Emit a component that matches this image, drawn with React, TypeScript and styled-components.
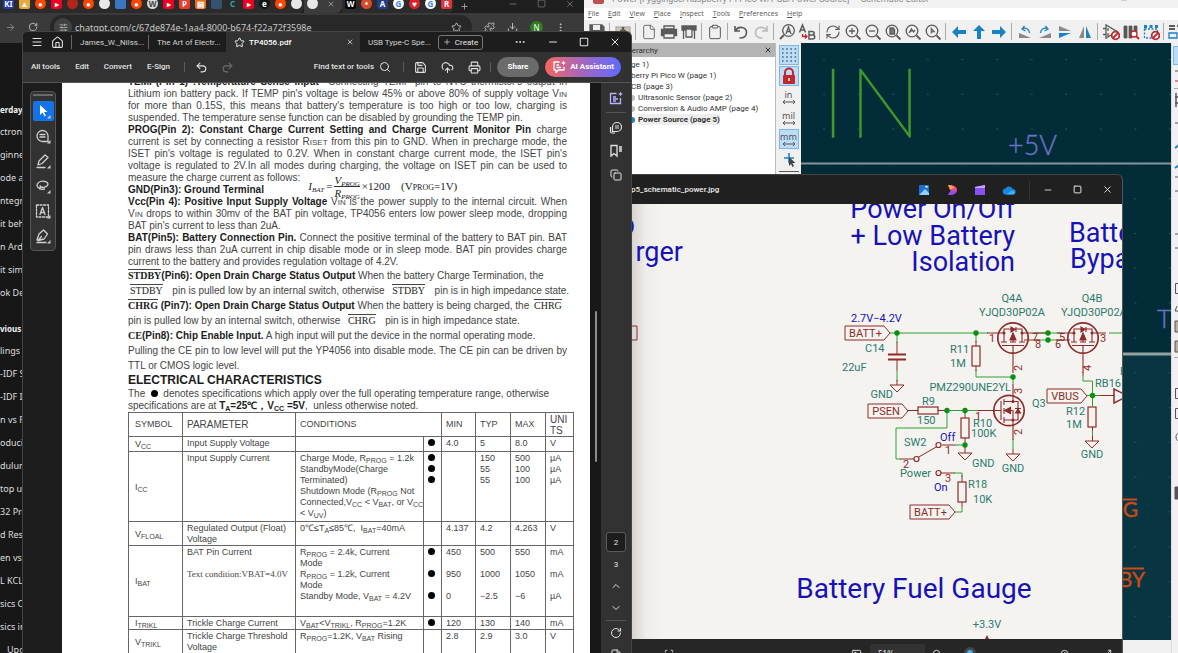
import React from 'react';
import styled, { createGlobalStyle, css } from 'styled-components';
import {
  Menu, House, Star, X, Plus, Ellipsis, Minus, Square, Search, Save, CloudUpload, Printer, Undo2, Redo2,
  MessageSquareText, Bookmark, Copy, ChevronUp, ChevronDown, RotateCw, RefreshCw, ZoomIn, ZoomOut, File as FileIcon,
  Clipboard, ArrowRight, Puzzle, Download, EllipsisVertical, SlidersHorizontal,
  Scan, Maximize2, Image as ImageIcon,
} from 'lucide-react';

const Global = createGlobalStyle`
  * { box-sizing: border-box; }
  body { margin: 0; background: #1b1b1b; }
  button { border: 0; padding: 0; margin: 0; background: none; color: inherit; font: inherit; display: flex; align-items: center; justify-content: center; white-space: nowrap; }
  svg { display: block; flex: none; }
`;

const ui = `"Noto Sans", "Open Sans", sans-serif`;
const narrowUi = `Roboto, "Noto Sans", sans-serif`;

const Desktop = styled.main`
  position: relative;
  min-height: 100vh;
  overflow: hidden;
  font-family: ${ui};
`;

/* ---------- web browser ---------- */
const Browser = styled.section`
  position: absolute;
  inset: 0 auto 0 0;
  width: 584px;
  display: flex;
  flex-direction: column;
  background: #171717;
  color: #d8d8d8;
`;
const TabStrip = styled.div`
  display: flex;
  align-items: center;
  height: 13px;
  background: #1f1f1f;
  color: #bdbdbd;
`;
const TabGroup = styled.div<{ $active?: boolean }>`
  display: flex;
  align-items: center;
  height: 13px;
  padding-bottom: 6px;
  border-radius: 0 0 6px 0;
  background: ${p => (p.$active ? '#3c3c3c' : '#2b2b2b')};
`;
const Favicon = styled.span<{ $bg: string; $fg?: string; $round?: boolean }>`
  flex: none;
  width: 11px;
  height: 11px;
  margin: 0 2px 0 3px;
  overflow: hidden;
  border-radius: ${p => (p.$round ? '6px' : '2px')};
  background: ${p => p.$bg};
  color: ${p => p.$fg || '#fff'};
  font-size: 8px;
  line-height: 11px;
  font-weight: 700;
  text-align: center;
`;
const StripEnd = styled.div`
  display: flex;
  flex: 1;
  justify-content: flex-end;
  gap: 19px;
  padding: 0 9px 6px 0;
  color: #777;
`;
const AddressRow = styled.div`
  display: flex;
  flex: none;
  align-items: center;
  height: 30px;
  padding: 0 8px 2px 5px;
  gap: 12px;
  background: #3a3a3a;
  color: #c8c8c8;
`;
const Address = styled.div`
  display: flex;
  align-items: center;
  width: 422px;
  height: 24px;
  padding: 0 10px 0 4px;
  gap: 3px;
  border-radius: 12px;
  background: #282828;
  font-size: 9px;
  span { flex: 1; }
`;
const SiteBadge = styled.div`
  display: grid;
  place-items: center;
  width: 18px;
  height: 18px;
  border-radius: 9px;
  background: #424242;
`;
const Avatar = styled.div`
  width: 13px;
  height: 13px;
  border-radius: 7px;
  background: #2f7d1f;
  color: #fff;
  font-size: 8px;
  line-height: 13px;
  text-align: center;
`;
const History = styled.nav`
  display: flex;
  flex-direction: column;
  width: 22px;
  padding-top: 55px;
  overflow: hidden;
  font-size: 9px;
`;
const HistoryItem = styled.a<{ $head?: boolean }>`
  flex: none;
  height: 23px;
  line-height: 23px;
  color: #dedede;
  text-decoration: none;
  white-space: nowrap;
  ${p => p.$head && css`height: 22px; font-size: 8px; font-weight: 700; color: #f2f2f2;`}
`;
const HistoryGap = styled.div`
  flex: none;
  height: 13px;
`;

/* ---------- schematic editor ---------- */
const Editor = styled.section`
  position: absolute;
  inset: 0 0 0 584px;
  display: flex;
  flex-direction: column;
  background: #f0f0f0;
  color: #555;
  overflow: hidden;
`;
const EditorTitle = styled.div`
  flex: none;
  display: flex;
  align-items: flex-end;
  height: 8px;
  padding: 0 50px 4px 6px;
  gap: 6px;
  overflow: hidden;
  background: #f2f2f2;
  color: #8a8a8a;
  h1 { flex: 1; margin: 0; font-family: ${narrowUi}; font-size: 9px; line-height: 9px; font-weight: 400; white-space: nowrap; }
`;
const MenuBar = styled.div`
  flex: none;
  display: flex;
  align-items: center;
  height: 12px;
  padding-left: 4px;
  gap: 9px;
  background: #fff;
  color: #555;
  font-family: "Open Sans", sans-serif;
  font-size: 7px;
  line-height: 10px;
  u { text-underline-offset: 1px; }
`;
const ToolRow = styled.div`
  flex: none;
  display: flex;
  align-items: center;
  height: 23px;
  padding-left: 3px;
  color: #5a5a5a;
`;
const Tool = styled.button<{ $dim?: boolean }>`
  flex: none;
  width: 20px;
  height: 20px;
  opacity: ${p => (p.$dim ? 0.35 : 1)};
`;
const Rule = styled.span`
  flex: none;
  width: 1px;
  height: 17px;
  margin: 0 3px 0 2px;
  background: #a9a9a9;
`;
const EditorBody = styled.div`
  display: flex;
  flex: 1;
  min-height: 0;
`;
const Hierarchy = styled.aside`
  width: 192px;
  flex: none;
  background: #fff;
  border-right: 1px solid #bbb;
  color: #333;
  font-family: ${narrowUi};
`;
const HierarchyHead = styled.div`
  display: flex;
  align-items: center;
  justify-content: space-between;
  height: 14px;
  padding: 0 3px 0 40px;
  background: #b4b4b4;
  font-size: 8px;
`;
const SheetList = styled.ul`
  margin: 0;
  padding: 2px 0 0;
  list-style: none;
  font-size: 8px;
  line-height: 11px;
`;
const Sheet = styled.li<{ $child?: boolean; $current?: boolean }>`
  display: flex;
  align-items: center;
  padding-left: ${p => (p.$child ? 45 : 47)}px;
  white-space: nowrap;
  ${p => p.$current && css`
    font-weight: 700;
    span { background: #eee; }
  `}
`;
const SheetDot = styled.i<{ $on?: boolean }>`
  width: 6px;
  height: 6px;
  margin-right: 3px;
  border-radius: 3px;
  background: ${p => (p.$on ? '#1a81c4' : '#bbb')};
`;
const Palette = styled.div`
  display: flex;
  flex: none;
  flex-direction: column;
  align-items: center;
  width: 25px;
  padding-top: 2px;
  gap: 1px;
`;
const PaletteTool = styled.button<{ $on?: boolean }>`
  width: 20px;
  height: 20px;
  flex-direction: column;
  border: 1px solid ${p => (p.$on ? '#7fb5e6' : 'transparent')};
  background: ${p => (p.$on ? '#bcdcf7' : 'transparent')};
  font-size: 9px;
  line-height: 9px;
`;
const Canvas = styled.div`
  flex: 1;
  min-width: 0;
  margin-bottom: 13px;
  overflow: hidden;
  background: #022c37;
`;
const EdgeTools = styled.div`
  flex: none;
  width: 7px;
  overflow: hidden;
  border-left: 1px solid #ddd;
`;

/* ---------- photo viewer ---------- */
const Viewer = styled.section`
  position: absolute;
  inset: 174px 55px 0 600px;
  display: flex;
  flex-direction: column;
  border-top: 1px solid #444;
  border-right: 1px solid #555;
  border-radius: 0 6px 0 0;
  overflow: hidden;
  background: #202020;
  color: #eee;
`;
const ViewerBar = styled.header`
  flex: none;
  display: flex;
  align-items: center;
  height: 29px;
  padding: 0 9px 0 31px;
  gap: 13px;
  font-family: ${narrowUi};
  h2 { flex: 1; margin: 0; font-size: 8px; font-weight: 500; }
`;
const ViewerApps = styled.div`
  display: flex;
  align-items: center;
  gap: 16px;
`;
const ViewerSep = styled.span`
  width: 1px;
  height: 18px;
  background: #333;
`;
const WinButtons = styled.div`
  display: flex;
  align-items: center;
  gap: 20px;
`;
const Photo = styled.div`
  flex: 1;
  min-height: 0;
  overflow: hidden;
  background: linear-gradient(90deg, #d4d1ce 31px, #efedea 46px, #f5f3ef 64px);
`;
const ViewerFoot = styled.footer`
  flex: none;
  display: flex;
  align-items: flex-start;
  height: 14px;
  padding: 10px 10px 0 64px;
  overflow: hidden;
  background: #262626;
  font-size: 8px;
`;
const FootSpace = styled.span<{ $max?: number }>`
  flex: 1;
  max-width: ${p => (p.$max ? `${p.$max}px` : 'none')};
`;
const ZoomBox = styled.button`
  width: 55px;
  height: 20px;
  margin: -5px 7px 0 8px;
  padding-left: 8px;
  justify-content: flex-start;
  border-radius: 3px;
  background: #323232;
  line-height: 8px;
`;
const Slider = styled.input`
  appearance: none;
  width: 88px;
  height: 12px;
  margin: -2px 14px 0 16px;
  background: transparent;
  &::-webkit-slider-thumb { appearance: none; width: 12px; height: 12px; border-radius: 6px; border: 3px solid #454545; background: #45b2f0; }
`;

/* ---------- PDF reader ---------- */
const Reader = styled.section`
  position: absolute;
  inset: 31px auto 0 22px;
  width: 610px;
  display: flex;
  flex-direction: column;
  border: 1px solid #444;
  border-bottom: 0;
  border-radius: 5px 6px 0 0;
  overflow: hidden;
  background: #1d1d1d;
  color: #e2e2e2;
  font-family: ${narrowUi};
`;
const ReaderTabs = styled.header`
  flex: none;
  display: flex;
  align-items: center;
  height: 20px;
  padding-left: 8px;
  font-size: 8px;
`;
const IconButton = styled.button<{ $w?: number }>`
  flex: none;
  width: ${p => p.$w || 24}px;
  height: 20px;
`;
const DocTab = styled.button<{ $w: number; $active?: boolean; $plain?: boolean }>`
  flex: none;
  width: ${p => p.$w}px;
  height: ${p => (p.$active ? 20 : 14)}px;
  padding: 0 6px 0 8px;
  gap: 4px;
  justify-content: flex-start;
  border-left: ${p => (p.$active || p.$plain ? 0 : 1)}px solid #666;
  background: ${p => (p.$active ? '#323232' : 'transparent')};
  color: ${p => (p.$active ? '#fff' : '#d4d4d4')};
  font-weight: ${p => (p.$active ? 500 : 400)};
  span { flex: 1; text-align: left; }
`;
const CreateButton = styled.button`
  flex: none;
  width: 45px;
  height: 15px;
  gap: 4px;
  border: 1px solid #777;
  border-radius: 3px;
`;
const ReaderTools = styled.div`
  flex: none;
  display: flex;
  align-items: center;
  height: 31px;
  padding: 0 10px 0 8px;
  border-bottom: 1px solid #555;
  background: #323232;
  font-size: 8px;
  line-height: 12px;
`;
const ToolWords = styled.div`
  display: flex;
  gap: 15px;
  margin-right: 14px;
  font-weight: 500;
`;
const ToolSep = styled.span`
  width: 1px;
  height: 10px;
  background: #5a5a5a;
`;
const Find = styled.button`
  gap: 5px;
  margin-left: auto;
  margin-right: 12px;
  font-weight: 500;
`;
const Pill = styled.button<{ $ai?: boolean }>`
  width: ${p => (p.$ai ? 76 : 42)}px;
  height: 20px;
  gap: 4px;
  margin-left: 6px;
  border-radius: 10px;
  background: ${p => (p.$ai ? 'linear-gradient(90deg, #f8655f, #9a67c9 55%, #5e6bff)' : '#6b6b6b')};
  color: #fff;
  font-weight: 700;
`;
const ReaderBody = styled.div`
  display: flex;
  flex: 1;
  min-height: 0;
`;
const SideTools = styled.div`
  flex: none;
  width: 39px;
  padding: 8px 6px 0 7px;
`;
const SideBox = styled.div`
  display: flex;
  flex-direction: column;
  align-items: center;
  height: 160px;
  gap: 5px;
  border: 1px solid #555;
  border-radius: 4px;
  background: #323232;
`;
const Grip = styled.span`
  width: 20px;
  height: 2px;
  margin: 2px 0 0;
  background: #6a6a6a;
`;
const SideTool = styled.button<{ $on?: boolean }>`
  width: 21px;
  height: 20px;
  border-radius: 2px;
  background: ${p => (p.$on ? '#1473e6' : 'transparent')};
`;
const Page = styled.article`
  flex: 1;
  min-width: 0;
  padding-left: 66px;
  padding-right: 16px;
  overflow: hidden;
  background: #fff;
  color: #444;
  font-family: "Liberation Sans", Arial, sans-serif;
  font-size: 10px;
  b { color: #1c1c1c; }
`;
const Copybox = styled.div<{ $loose?: boolean; $first?: boolean }>`
  width: 439px;
  margin-top: ${p => (p.$first ? -7 : 0)}px;
  line-height: ${p => (p.$loose ? 15 : 12)}px;
`;
const Line = styled.div<{ $fill?: boolean }>`
  white-space: nowrap;
  height: 1lh;
  text-align-last: ${p => (p.$fill ? 'justify' : 'left')};
`;
const Small = styled.span`
  font-size: 8px;
  line-height: 1px;
`;
const Sub = styled.sub`
  font-size: 7px;
  line-height: 1px;
  vertical-align: -2px;
`;
const Bar = styled.span<{ $bold?: boolean }>`
  display: inline-block;
  height: 12px;
  margin: ${p => (p.$bold ? '0' : '0 4px 0 2px')};
  border-top: 1px solid #444;
  color: #222;
  font-family: "Liberation Serif", serif;
  font-size: 10px;
  line-height: 12px;
  font-weight: ${p => (p.$bold ? 700 : 400)};
`;
const Serif = styled.span`
  font-family: "Liberation Serif", serif;
`;
const FormulaLine = styled(Line)`
  display: flex;
  align-items: center;
`;
const Formula = styled.span`
  display: flex;
  align-items: center;
  margin-left: 8px;
  gap: 2px;
  height: 12px;
  padding-top: 16px;
  color: #222;
  font-family: "Liberation Serif", serif;
  font-size: 11px;
`;
const Fraction = styled.span`
  display: flex;
  flex-direction: column;
  align-items: center;
  line-height: 12px;
  font-style: italic;
  span + span { border-top: 1px solid #333; }
`;
const Condition = styled.span`
  margin-left: 9px;
`;
const Title = styled.h2`
  margin: 0;
  font-size: 12px;
  line-height: 15px;
  color: #1c1c1c;
`;
const Dot = styled.i`
  display: inline-block;
  width: 7px;
  height: 7px;
  border-radius: 4px;
  background: #000;
`;
const Spec = styled.table`
  width: 446px;
  table-layout: fixed;
  border-collapse: collapse;
  font-size: 9px;
  line-height: 11px;
  th, td { border: 1px solid #666; padding: 1px 0 0 4px; font-weight: 400; text-align: left; vertical-align: top; white-space: nowrap; }
  th { vertical-align: middle; padding-top: 0; }
  td:first-child, th:first-child { vertical-align: middle; padding-left: 6px; }
`;
const Row = styled.tr<{ $h: number }>`
  height: ${p => p.$h}px;
`;
const Head = styled.th<{ $big?: boolean; $open?: boolean }>`
  font-size: ${p => (p.$big ? 10 : 9)}px;
  ${p => p.$open && css`&& { border-left-color: transparent; }`}
`;
const Cell = styled.td`
  div { height: 11px; }
`;
const Track = styled.div`
  flex: none;
  width: 11px;
  padding: 228px 0 0 5px;
  background: #181818;
`;
const Thumb = styled.div`
  width: 2px;
  height: 151px;
  border-radius: 1px;
  background: #8c8c8c;
`;
const Rail = styled.aside`
  flex: none;
  display: flex;
  flex-direction: column;
  align-items: center;
  width: 30px;
  padding-top: 5px;
  gap: 4px;
  background: #323232;
  font-size: 8px;
`;
const RailSep = styled.span`
  flex: none;
  width: 20px;
  height: 1px;
  background: #555;
`;
const PageNo = styled.button<{ $on?: boolean }>`
  flex: none;
  width: 20px;
  height: 20px;
  border: 1px solid ${p => (p.$on ? '#5a5a5a' : 'transparent')};
  border-radius: 3px;
  background: ${p => (p.$on ? '#1d1d1d' : 'transparent')};
`;
const RailEnd = styled.div`
  display: flex;
  flex: none;
  flex-direction: column;
  align-items: center;
  height: 121px;
  margin-top: auto;
  gap: 2px;
  overflow: hidden;
`;

/* ---------- data ---------- */
const favA: [string, string, boolean?, string?][] = [
  ['#2439a8', 'KI'], ['#e5a93c', '▲'], ['#ff4500', '●', true], ['#f00020', '▸'], ['#b3261e', '', true], ['#ff4500', '●', true],
  ['#e8e8e8', '', true], ['#3a76c4', ''], ['#ff4500', '●', true], ['#d8d8d8', 'W', true, '#444'], ['#f00020', '▸'], ['#f03a28', 'P'],
  ['#e96a1d', '▤'], ['#34536e', ''], ['#2b2b2b', 'C', true, '#28a5b5'], ['#f00020', '▸'], ['#151515', 'e', true], ['#ff4500', '●', true],
  ['#e8e8e8', '', true],
];
const favB: [string, string, boolean?, string?][] = [
  ['#050505', 'W'], ['#d84a2c', '•', true], ['#213f82', 'A'], ['#fff', 'G', true, '#3f7be8'], ['#d8232a', '♥', true],
  ['#fff', 'G', true, '#3f7be8'], ['#e0323c', 'R'],
];
const dayOne = ['ctronic', 'ginner', 'ode an', 'ntegra', 'it beh', 'n Ardu', 'it sim', 'ok Dec'];
const weekOne = ['lings o', '-IDF S', '-IDF I', 'n vs Fe', 'oducin', 'dulum', 'top us', '32 Pro', 'd Resi', 'en vs S', 'L KCL C', 'sics C', 'sics in'];

/* ---------- schematic glyphs ---------- */
const RED = '#8f2b2b';
const GREEN = '#2fa12f';
const TEAL = '#2b7b70';
const BLUE = '#1512b8';

const Wire = ({ d, c = GREEN }: { d: string; c?: string }) => <path d={d} fill="none" stroke={c} strokeWidth="1" />;
const Joint = ({ x, y }: { x: number; y: number }) => <circle cx={x} cy={y} r="2.7" fill="#0a8f12" />;
const Label = styled.text<{ $c?: string; $s?: number }>`
  font-family: Roboto, sans-serif;
  font-size: ${p => p.$s || 11}px;
  fill: ${p => p.$c || TEAL};
`;
const Flag = ({ x, y, w, name }: { x: number; y: number; w: number; name: string }) => (
  <g>
    <path d={`M${x} ${y - 7}h${w - 6}l6 7l-6 7h-${w - 6}z`} fill="none" stroke={RED} />
    <Label $c={RED} x={x + (w - 6) / 2 + 1} y={y + 4} textAnchor="middle">{name}</Label>
  </g>
);
const Ground = ({ x, y }: { x: number; y: number }) => <path d={`M${x - 7} ${y}h14l-7 7z`} fill="none" stroke={RED} />;
const Resistor = ({ x, y }: { x: number; y: number }) => <rect x={x - 4} y={y} width="8" height="20" fill="none" stroke={RED} strokeWidth="1.2" />;
const Pfet = ({ x }: { x: number }) => (
  <g stroke={RED} fill="none" strokeWidth="1.1">
    <circle cx={x} cy="338" r="15.2" strokeWidth="1.7" />
    <path d={`M${x - 26} 333h17v9M${x + 9} 342v-9h14M${x - 9} 333v-4h18v4M${x} 336v6M${x - 12} 342h6M${x - 3} 342h6M${x + 6} 342h6M${x - 11} 345.500h22M${x} 345v28`} />
    <path d={`M${x - 2} 327v5l4-2.500zM${x + 3} 327v5`} fill={RED} />
    <path d={`M${x - 3} 340h6l-3-7z`} fill={RED} />
    <circle cx={x - 9} cy="333" r="1" fill={RED} />
    <circle cx={x + 9} cy="333" r="1" fill={RED} />
  </g>
);

const Schematic = () => (
  <svg width="523" height="435" viewBox="600 204 523 435" role="img" aria-label="Battery power schematic">
    <g>
      <Label $c={BLUE} $s={27} x="635" y="234" textAnchor="end">p</Label>
      <Label $c={BLUE} $s={27} x="683" y="261" textAnchor="end">rger</Label>
      <Label $c={BLUE} $s={27} x="1015" y="218" textAnchor="end">Power On/Off</Label>
      <Label $c={BLUE} $s={27} x="1015" y="245" textAnchor="end">+ Low Battery</Label>
      <Label $c={BLUE} $s={27} x="1015" y="271" textAnchor="end">Isolation</Label>
      <Label $c={BLUE} $s={27} x="1069" y="242">Battery</Label>
      <Label $c={BLUE} $s={27} x="1070" y="268">Bypass</Label>
      <Label $c={BLUE} $s={28} x="914" y="598" textAnchor="middle">Battery Fuel Gauge</Label>
    </g>
    <path d="M620 326h17v14h-17" fill="none" stroke={RED} />
    <Label $c={BLUE} x="851" y="322">2.7V−4.2V</Label>
    <Flag x={845} y={333} w={45} name="BATT+" />
    <Wire d="M890 333H988M897 333V343M897 371V381M976 333V342M976 370V377H1013V384M1034 333H1062M1034 340H1062M1109 333H1123" />
    <Wire c={RED} d="M897 342V354M897 359V371M897 380V385M976 341V346M976 366V371M1036 333H1046M1024 340H1040M1056 340H1070" />
    <path d="M888 354.500h18M888 359.500h18" stroke={RED} strokeWidth="1.800" />
    <Ground x={897} y={385} />
    <Label x="865" y="352">C14</Label>
    <Label x="842" y="371">22uF</Label>
    <Label x="893" y="398" textAnchor="end">GND</Label>
    <Resistor x={976} y={346} />
    <Label x="950" y="353">R11</Label>
    <Label x="950" y="367">1M</Label>
    <Pfet x={1013} />
    <Pfet x={1083} />
    <Label x="1012" y="302" textAnchor="middle">Q4A</Label>
    <Label x="1012" y="316" textAnchor="middle">YJQD30P02A</Label>
    <Label x="1092" y="302" textAnchor="middle">Q4B</Label>
    <Label x="1061" y="316">YJQD30P02A</Label>
    <g>
      <Label $c={RED} x="989" y="342">1</Label>
      <Label $c={RED} x="1032" y="341">7</Label>
      <Label $c={RED} x="1035" y="348">8</Label>
      <Label $c={RED} x="1059" y="341">5</Label>
      <Label $c={RED} x="1055" y="348">6</Label>
      <Label $c={RED} x="1100" y="342">3</Label>
      <Label $c={RED} x="975" y="420">1</Label>
      <Label $c={RED} x="945" y="454">1</Label>
      <Label $c={RED} x="903" y="468">2</Label>
      <Label $c={RED} x="945" y="482">3</Label>
      <Label $c={RED} transform="translate(1022 371) rotate(-90)">2</Label>
      <Label $c={RED} transform="translate(1022 394) rotate(-90)">3</Label>
      <Label $c={RED} transform="translate(1022 435) rotate(-90)">2</Label>
      <Label $c={RED} transform="translate(1091 371) rotate(-90)">4</Label>
    </g>
    <Label x="1011" y="391" textAnchor="end">PMZ290UNE2YL</Label>
    <g stroke={RED} fill="none" strokeWidth="1.100">
      <circle cx="1009" cy="410.500" r="15.200" strokeWidth="1.700" />
      <path d="M975 410.500H1001M1001 401v19M1004 399v6M1004 408v6M1004 417v6M1004 401.500h9V384M1004 420h9v20M1006 410.500h7V420M1013 401.500h5v18.500h-5M1015 408.500h6" />
      <path d="M1004.500 410.500l6-3v6zM1015.500 413h5l-2.500-4z" fill={RED} />
      <circle cx="1013" cy="401.500" r="1" fill={RED} />
      <circle cx="1013" cy="420" r="1" fill={RED} />
    </g>
    <Label x="1032" y="407">Q3</Label>
    <Wire d="M1013 439V449" />
    <Wire c={RED} d="M1013 449V454" />
    <Ground x={1013} y={454} />
    <Label x="1013" y="472" textAnchor="middle">GND</Label>
    <Flag x={868} y={411} w={40} name="PSEN" />
    <Wire c={RED} d="M908 410.500H918M938 410.500H946M965 411V418M965 438V453M900 459H914M918 457.500L937 446.500M942 445H956M941 473H955M962 475V482M962 502V507" />
    <Wire d="M945 410.500H978M947 411V428H896V459H901M956 445H965M954 473H962V477M962 507V512H955" />
    <rect x="918" y="407" width="20" height="7" fill="none" stroke={RED} strokeWidth="1.200" />
    <Label x="922" y="405">R9</Label>
    <Label x="917" y="424">150</Label>
    <Resistor x={965} y={418} />
    <Label x="973" y="427">R10</Label>
    <Label x="971" y="437">100K</Label>
    <Ground x={965} y={453} />
    <Label x="972" y="467">GND</Label>
    <g stroke={RED} fill="#f5f3ef" strokeWidth="1.200">
      <circle cx="916.500" cy="459" r="2.500" />
      <circle cx="938.500" cy="445" r="2.500" />
      <circle cx="938.500" cy="473" r="2.500" />
    </g>
    <Label x="904" y="446">SW2</Label>
    <Label x="900" y="477">Power</Label>
    <Label $c={BLUE} x="940" y="441">Off</Label>
    <Label $c={BLUE} x="934" y="491">On</Label>
    <Resistor x={962} y={482} />
    <Label x="968" y="488">R18</Label>
    <Label x="973" y="503">10K</Label>
    <Flag x={910} y={512} w={45} name="BATT+" />
    <Wire c={RED} d="M1083 372V376M1098 395.500H1114M1092.500 400V406M1092.500 427V441" />
    <Wire d="M1083 376V381H1092.500V406M1087 395.500H1099M1092.500 430V436" />
    <Flag x={1047} y={396} w={40} name="VBUS" />
    <path d="M1114 389v14l14-7z" fill="none" stroke={RED} strokeWidth="1.500" />
    <Label x="1095" y="387">RB16</Label>
    <Label x="1120" y="375">D</Label>
    <Resistor x={1092} y={407} />
    <Label x="1066" y="415">R12</Label>
    <Label x="1066" y="428">1M</Label>
    <Ground x={1092} y={441} />
    <Label x="1092" y="458" textAnchor="middle">GND</Label>
    <Joint x={897} y={333} />
    <Joint x={976} y={333} />
    <Joint x={1048} y={333} />
    <Joint x={1048} y={340} />
    <Joint x={1013} y={377} />
    <Joint x={947} y={410.5} />
    <Joint x={965} y={410.5} />
    <Joint x={965} y={445} />
    <Joint x={1092.5} y={395.5} />
    <Label x="987" y="628" textAnchor="middle">+3.3V</Label>
    <path d="M985 639l2-4l2 4z" fill={RED} />
  </svg>
);

const CanvasText = styled.text<{ $s: number; $w?: number; $ink: string }>`
  font-family: Lato, Roboto, sans-serif;
  font-size: ${p => p.$s}px;
  font-weight: ${p => p.$w || 300};
  fill: ${p => p.$ink};
  stroke: ${p => p.$ink};
  stroke-width: ${p => (p.$w === 100 ? 1.4 : 0.4)}px;
`;
const EditorDrawing = () => (
  <svg width="370" height="597" viewBox="801 43 370 597" role="img" aria-label="Schematic canvas">
    <defs>
      <pattern id="grid" x="807" y="42" width="34.600" height="34.800" patternUnits="userSpaceOnUse">
        <rect x="16" y="17" width="2" height="1" fill="#2b5561" />
      </pattern>
    </defs>
    <rect x="1100" y="354" width="80" height="290" fill="#073642" />
    <rect x="801" y="43" width="370" height="600" fill="url(#grid)" />
    <path d="M801 163.500H1171" stroke="#83979a" strokeWidth="2" />
    <path d="M1100 354H1171" stroke="#93a1a1" strokeWidth="3" />
    <CanvasText $s={97} $w={100} $ink="#3f9a2a" x="833" y="137" textAnchor="middle">I</CanvasText>
    <CanvasText $s={97} $w={100} $ink="#3f9a2a" x="885" y="137" textAnchor="middle">N</CanvasText>
    <CanvasText $s={27} $ink="#6c71c4" x="1008" y="155">+5V</CanvasText>
    <CanvasText $s={25} $ink="#6c71c4" x="1157" y="328">T</CanvasText>
    <CanvasText $s={21} $w={400} $ink="#cb4b16" x="1138" y="517" textAnchor="end">G</CanvasText>
    <CanvasText $s={21} $w={400} $ink="#cb4b16" x="1145" y="587" textAnchor="end">BY</CanvasText>
    <path d="M1110 499.500H1137M1110 568.500H1144" stroke="#cb4b16" strokeWidth="2" />
  </svg>
);

/* ---------- toolbar drawings ---------- */
const Draw = ({ children, s = 18 }: { children: React.ReactNode; s?: number }) => (
  <svg width={s} height={s} viewBox="0 0 18 18" fill="none" stroke="#5a5a5a" strokeWidth="1.300">{children}</svg>
);
const Arrow = ({ r }: { r: number }) => (
  <Draw><path transform={`rotate(${r} 9 9)`} d="M2 9l6-6v4h8v4H8v4z" fill="#1a81c4" stroke="none" /></Draw>
);
const Ban = () => (
  <g>
    <circle cx="13.500" cy="12.500" r="3.800" fill="#fff" stroke="#c1272d" strokeWidth="1.800" />
    <path d="M11 15l5-5" stroke="#c1272d" strokeWidth="1.800" />
  </g>
);
const Lens = ({ children }: { children: React.ReactNode }) => (
  <Draw><circle cx="8" cy="8" r="5.800" /><path d="M12.500 12.500l4 4" strokeWidth="1.800" />{children}</Draw>
);

const editorTools: ({ n: string; i: React.ReactNode; dim?: boolean } | null)[] = [
  { n: 'Save', i: <Draw><path d="M2 2h12l2 2v12H2z" fill="#5a5a5a" /><path d="M5 2h7v5H5zM5 10h8v6H5z" fill="#eee" stroke="none" /></Draw> }, null,
  { n: 'Schematic setup', i: <Draw><rect x="2" y="4" width="14" height="11" fill="#cfc7ad" stroke="#aaa" /><path d="M9 4v9M6 8h6" strokeWidth="2.500" /></Draw> }, null,
  { n: 'Page settings', i: <FileIcon size={16} strokeWidth={1.3} /> },
  { n: 'Print', i: <Draw><path d="M4 3h10v3H4z" /><path d="M1.500 6.500h15v6h-15z" fill="#5a5a5a" /><path d="M4 10.500h10V15H4z" fill="#eee" /></Draw> },
  { n: 'Plot', i: <Draw><path d="M2 3h14v4H2z" fill="#5a5a5a" /><path d="M3.500 7v9M14.500 7v9M6 6h6v8H6z" fill="#eee" /></Draw> }, null,
  { n: 'Paste', i: <Clipboard size={16} strokeWidth={1.5} /> }, null,
  { n: 'Undo', i: <Draw><path d="M3 3v5h5M3.500 7.500c3-5 11-3.500 11 2c0 4-3 5.500-7 5.500" strokeWidth="1.600" /></Draw> },
  { n: 'Redo', dim: true, i: <Draw><path d="M15 3v5h-5M14.500 7.500c-3-5-11-3.500-11 2c0 4 3 5.500 7 5.500" strokeWidth="1.600" /></Draw> }, null,
  { n: 'Find', i: <Draw><circle cx="10.500" cy="7.500" r="5.800" /><path d="M6 12l-4 4" strokeWidth="2" /><path d="M8 11l2.500-7l2.500 7M9 8.500h3" /></Draw> },
  { n: 'Replace', i: <Draw><path d="M1.500 9.500L4.500 2l3 7.500M2.500 7h4" strokeWidth="1.500" /><path d="M11 8.500h3c3 0 3 3.500 0 3.500h-3zM11 12h3.500c3 0 3 4 0 4H11z" strokeWidth="1.500" /><path d="M4.500 11v2.500h4M7 11.500l2 2l-2 2" stroke="#c1272d" /></Draw> }, null,
  { n: 'Refresh', i: <RefreshCw size={16} strokeWidth={1.7} /> },
  { n: 'Zoom in', i: <Lens><path d="M5 8h6M8 5v6" /></Lens> },
  { n: 'Zoom out', i: <Lens><path d="M5 8h6" /></Lens> },
  { n: 'Zoom to page', i: <Lens><path d="M6 5h3l1.500 1.500V11H6z" fill="#777" /></Lens> },
  { n: 'Zoom to objects', i: <Lens><path d="M5 10l2.500-4l2 3l1.500-2" fill="#777" /></Lens> },
  { n: 'Zoom to selection', i: <Lens><path d="M7 4.500v6l1.500-1.500l2.500 0z" fill="#777" strokeWidth="0.600" /></Lens> }, null,
  { n: 'Navigate back', i: <Arrow r={0} /> },
  { n: 'Navigate up', i: <Arrow r={90} /> },
  { n: 'Navigate forward', i: <Arrow r={180} /> }, null,
  { n: 'Rotate left', i: <Draw><path d="M3 15V10l12 5z" fill="#888" stroke="none" /><path d="M6 6c4-2 7 0 7.500 4M8.500 3L6 6l3.500 2" stroke="#1a81c4" /></Draw> },
  { n: 'Rotate right', i: <Draw><path d="M15 15V10L3 15z" fill="#888" stroke="none" /><path d="M12 6C8 4 5 6 4.500 10M9.500 3L12 6L8.500 8" stroke="#1a81c4" /></Draw> },
  { n: 'Mirror vertically', i: <Draw><path d="M3 3v5h12z" fill="#888" stroke="none" /><path d="M3 15v-5h12z" fill="#1a81c4" stroke="none" /></Draw> },
  { n: 'Mirror horizontally', i: <Draw><path d="M3 15h5V3z" fill="#888" stroke="none" /><path d="M15 15h-5V3z" fill="#1a81c4" stroke="none" /></Draw> }, null,
  { n: 'Rules check', i: <Draw><path d="M4 2v13l11-6.500zM1 5.500h3M1 11.500h3M6 5v3M6 10v3" /><Ban /></Draw> },
  { n: 'Footprints', i: <Draw><path d="M2 3h3v12H2zM7 3h3v12H7zM12 3h3v6h-3z" fill="#555" strokeWidth="0.800" /><circle cx="12" cy="11" r="3" fill="#fff" stroke="#c1272d" /><path d="M14 13l3 3" stroke="#c1272d" strokeWidth="2" /></Draw> },
  { n: 'Assign', i: <Draw><path d="M2 2h3v3H2zM7.500 2h3v3h-3zM13 2h3v3h-3z" fill="#1a81c4" stroke="none" /><rect x="2.500" y="6" width="13" height="9" strokeDasharray="2 1.500" stroke="#1a81c4" /><Ban /></Draw> }, null,
  { n: 'Annotate', i: <Draw><path d="M1 3h6M1 6h6M9 3h5" strokeWidth="2" /><path d="M1 10h8v5H1z" stroke="#1a81c4" /></Draw> },
];

const Units = ({ t }: { t: string }) => (
  <>
    {t}
    <svg width="14" height="6" viewBox="0 0 14 6" fill="none" stroke="#555"><path d="M1 3h12M3 1L1 3l2 2M11 1l2 2l-2 2" /></svg>
  </>
);

const Corner = ({ children }: { children: React.ReactNode }) => (
  <svg width="18" height="18" viewBox="0 0 18 18" fill="none" stroke="#d0d0d0" strokeWidth="1.300" strokeLinejoin="round" strokeLinecap="round">
    {children}
    <path d="M16.500 13v3.500H13z" fill="#d0d0d0" stroke="none" />
  </svg>
);
const Sparkle = () => <path d="M11.500 0.500l.8 1.700l1.700.8l-1.700.8l-.8 1.700l-.8-1.700l-1.700-.8l1.700-.8z" fill="currentColor" stroke="none" />;
const AiChat = () => (
  <svg width="14" height="14" viewBox="0 0 14 14" fill="none" stroke="currentColor" strokeWidth="1.300" strokeLinejoin="round">
    <path d="M7.500 2H2v8h2v2.500L6.500 10H12V7M4.500 5h2.500M4.500 7.500h4.500" /><Sparkle />
  </svg>
);
const AiNote = () => (
  <svg width="14" height="14" viewBox="0 0 14 14" fill="none" stroke="#b9b3ff" color="#b9b3ff" strokeWidth="1.300">
    <path d="M7.500 2.500H1.500v10h10V7M4 6h3M4 8h5M4 10h3" /><Sparkle />
  </svg>
);
const Comments = () => (
  <svg width="14" height="14" viewBox="0 0 14 14" fill="none" stroke="currentColor" strokeWidth="1.200">
    <path d="M3.500 7a4.500 4.500 0 1 1 4.500 4.500H3.500zM6 6h4M6 8h4M1.500 7v4.500q0 1.500 1.500 1.500h3" />
  </svg>
);
const Marks = () => (
  <svg width="14" height="14" viewBox="0 0 14 14" fill="none" stroke="currentColor" strokeWidth="1.300">
    <path d="M2 1.500h6v10.500l-3-2.500l-3 2.500zM10 3h3M10 5h3M10 7h3" />
  </svg>
);

const P = () => <Sub>PROG</Sub>;

export default function App() {
  return (
    <>
      <Global />
      <Desktop>
        <Browser aria-label="Web browser">
          <TabStrip>
            <TabGroup>
              {favA.map(([bg, t, round, fg], i) => <Favicon key={i} $bg={bg} $round={round} $fg={fg}>{t}</Favicon>)}
            </TabGroup>
            <TabGroup $active>
              <Favicon $bg="#e8e8e8" $round />
              <IconButton $w={22} aria-label="Close tab"><X size={8} /></IconButton>
            </TabGroup>
            <TabGroup>
              {favB.map(([bg, t, round, fg], i) => <Favicon key={i} $bg={bg} $round={round} $fg={fg}>{t}</Favicon>)}
            </TabGroup>
            <IconButton $w={20} aria-label="New tab"><Plus size={9} /></IconButton>
            <StripEnd><Minus size={10} /><Square size={9} /><X size={10} /></StripEnd>
          </TabStrip>
          <AddressRow>
            <ArrowRight size={11} color="#888" />
            <RotateCw size={10} />
            <Address>
              <SiteBadge><SlidersHorizontal size={9} /></SiteBadge>
              <span>chatgpt.com/c/67de874e-1aa4-8000-b674-f22a72f3598e</span>
              <Star size={11} />
            </Address>
            <Puzzle size={11} />
            <Download size={11} />
            <Avatar>N</Avatar>
            <EllipsisVertical size={11} />
          </AddressRow>
          <History aria-label="Chats">
            <HistoryItem href="#" $head>erday</HistoryItem>
            {dayOne.map(t => <HistoryItem key={t} href="#">{t}</HistoryItem>)}
            <HistoryGap />
            <HistoryItem href="#" $head>vious 7</HistoryItem>
            {weekOne.map(t => <HistoryItem key={t} href="#">{t}</HistoryItem>)}
            <HistoryItem href="#">&nbsp;&nbsp;&nbsp;Upg</HistoryItem>
          </History>
        </Browser>

        <Editor aria-label="Schematic editor">
          <EditorTitle>
            <Favicon $bg="#c0504d" />
            <h1>Power [Fyggingsc/Raspberry Pi Pico W/PCB/Power Source] — Schematic Editor</h1>
            <Minus size={8} />
          </EditorTitle>
          <MenuBar>
            {['File', 'Edit', 'View', 'Place', 'Inspect', 'Tools', 'Preferences', 'Help'].map(m => (
              <button key={m}><span><u>{m[0]}</u>{m.slice(1)}</span></button>
            ))}
          </MenuBar>
          <ToolRow>
            {editorTools.map((t, i) => (t ? <Tool key={i} aria-label={t.n} $dim={t.dim}>{t.i}</Tool> : <Rule key={i} />))}
          </ToolRow>
          <EditorBody>
            <Hierarchy>
              <HierarchyHead>Hierarchy<X size={8} strokeWidth={3} /></HierarchyHead>
              <SheetList>
                <Sheet>ge 1)</Sheet>
                <Sheet>berry Pi Pico W (page 1)</Sheet>
                <Sheet>CB (page 3)</Sheet>
                <Sheet $child><SheetDot /><span>Ultrasonic Sensor (page 2)</span></Sheet>
                <Sheet $child><SheetDot /><span>Conversion &amp; Audio AMP (page 4)</span></Sheet>
                <Sheet $child $current><SheetDot $on /><span>Power Source (page 5)</span></Sheet>
              </SheetList>
            </Hierarchy>
            <Palette>
              <PaletteTool $on aria-label="Grid">
                <svg width="16" height="16" viewBox="0 0 16 16" stroke="#45657e" strokeWidth="1.600" strokeDasharray="1.600 2.600"><path d="M1 2h15M1 6h15M1 10h15M1 14h15" /></svg>
              </PaletteTool>
              <PaletteTool $on aria-label="Lock">
                <svg width="16" height="18" viewBox="0 0 16 18"><path d="M4 8V5.500a4 4 0 0 1 8 0V8" fill="none" stroke="#c1272d" strokeWidth="2" /><rect x="2" y="8" width="12" height="9" rx="1" fill="#c1272d" /><path d="M8 11v3" stroke="#fff" strokeWidth="1.500" /></svg>
              </PaletteTool>
              <PaletteTool><Units t="in" /></PaletteTool>
              <PaletteTool><Units t="mil" /></PaletteTool>
              <PaletteTool $on><Units t="mm" /></PaletteTool>
              <PaletteTool aria-label="Cursor">
                <svg width="14" height="16" viewBox="0 0 14 16"><path d="M7 1v10M2 6h10" stroke="#1a81c4" strokeWidth="1.600" /><path d="M7 5v9l2-2l1.500 3l1.500-1l-1.500-3h3z" fill="#444" /></svg>
              </PaletteTool>
              <RailSep />
            </Palette>
            <Canvas><EditorDrawing /></Canvas>
            <EdgeTools>
              <svg width="7" height="597" viewBox="0 0 7 597" fill="none" stroke="#555">
                <rect x="1.500" y="3.500" width="10" height="18" fill="#bcdcf7" stroke="#7fb5e6" />
                <path d="M3 28h4M3 80h4M3 134h4M3 148h4M3 191h4M3 205h4" />
                <path d="M3 38h4" stroke="#c1272d" />
                <path d="M2 45.500h5M2 314.500h5" stroke="#aaa" />
                <path d="M4 50v14M3 54h4M3 60h4" strokeWidth="1.500" />
                <path d="M3 105l4-3M3 125l4-3" stroke="#1a81c4" strokeWidth="2" />
                <path d="M3.500 240.500h5v10h-5zM3.500 345.500h5v10h-5zM3.500 365.500h5v10h-5zM5 263l-2 5h4M7 390c-4 0-4 8 0 8" />
                <path d="M3 278h6v11H3zM3 298h6v11H3z" fill="#b8b0a0" />
                <path d="M3 444h6v12H3z" fill="#555" />
              </svg>
            </EdgeTools>
          </EditorBody>
        </Editor>

        <Viewer aria-label="Photo viewer">
          <ViewerBar>
            <h2>p5_schematic_power.jpg</h2>
            <ViewerApps>
              <svg width="12" height="12" viewBox="0 0 12 12"><rect x="1" y="1" width="10" height="10" rx="1" fill="#1b6fd0" /><path d="M1 11l6-6l4 4v2z" fill="#8fd0ff" /><path d="M7 3l2-1v2" stroke="#fff" fill="none" /></svg>
              <svg width="12" height="12" viewBox="0 0 12 12"><path d="M2 1c7 0 9 2 9 5s-3 5-9 5l3-5z" fill="#e9498f" /><path d="M2 1c4 0 5 1 6 3L4 6z" fill="#f6a43b" /><path d="M2 11l3-5l5 2c-2 3-5 3-8 3z" fill="#8a4ff0" /></svg>
              <svg width="12" height="12" viewBox="0 0 12 12"><path d="M1 3l10-2v10H1z" fill="#8a4ff0" /><path d="M1 3l10-2v3H1z" fill="#c9a4ff" /></svg>
              <svg width="14" height="12" viewBox="0 0 14 12"><path d="M4 10.500a3 3 0 0 1-.5-6a4 4 0 0 1 7.300.6a2.700 2.700 0 0 1 .2 5.400z" fill="#1a86dc" /><path d="M4 10.500l6-4c3 0 4 4 1 4z" fill="#3fb0f5" /></svg>
            </ViewerApps>
            <ViewerSep />
            <WinButtons>
              <button aria-label="Minimize"><Minus size={10} /></button>
              <button aria-label="Maximize"><Square size={9} strokeWidth={2.5} /></button>
              <button aria-label="Close"><X size={11} /></button>
            </WinButtons>
          </ViewerBar>
          <Photo><Schematic /></Photo>
          <ViewerFoot>
            <Scan size={10} />
            <FootSpace />
            <ImageIcon size={11} />
            <ZoomBox>51%</ZoomBox>
            <ZoomOut size={10} />
            <Slider type="range" defaultValue={8} aria-label="Zoom" />
            <ZoomIn size={10} />
            <FootSpace $max={32} />
            <Maximize2 size={10} />
          </ViewerFoot>
        </Viewer>

        <Reader aria-label="PDF reader">
          <ReaderTabs>
            <IconButton $w={12} aria-label="Menu"><Menu size={12} /></IconButton>
            <IconButton $w={28} aria-label="Home"><House size={13} /></IconButton>
            <DocTab $w={77}>James_W._Nilss...</DocTab>
            <DocTab $w={78}>The Art of Electr...</DocTab>
            <DocTab $w={134} $active><Star size={11} /><span>TP4056.pdf</span><X size={8} /></DocTab>
            <DocTab $w={78} $plain>USB Type-C Spe...</DocTab>
            <CreateButton><Plus size={8} />Create</CreateButton>
            <FootSpace />
            <IconButton $w={33} aria-label="More"><Ellipsis size={12} /></IconButton>
            <IconButton $w={33} aria-label="Minimize"><Minus size={12} /></IconButton>
            <IconButton $w={30} aria-label="Maximize"><Square size={10} strokeWidth={2.5} /></IconButton>
            <IconButton $w={32} aria-label="Close"><X size={12} /></IconButton>
          </ReaderTabs>
          <ReaderTools>
            <ToolWords><button>All tools</button><button>Edit</button><button>Convert</button><button>E-Sign</button></ToolWords>
            <ToolSep />
            <IconButton $w={32} aria-label="Undo"><Undo2 size={13} /></IconButton>
            <IconButton $w={20} aria-label="Redo"><Redo2 size={13} color="#6d6d6d" /></IconButton>
            <Find>Find text or tools<Search size={12} /></Find>
            <ToolSep />
            <IconButton $w={32} aria-label="Save"><Save size={13} /></IconButton>
            <IconButton $w={22} aria-label="Upload"><CloudUpload size={13} /></IconButton>
            <IconButton $w={32} aria-label="Print"><Printer size={13} /></IconButton>
            <ToolSep />
            <Pill>Share</Pill>
            <Pill $ai><AiChat />AI Assistant</Pill>
          </ReaderTools>
          <ReaderBody>
            <SideTools>
              <SideBox>
                <Grip />
                <SideTool $on aria-label="Select"><Corner><path d="M6 3v10l2.500-2.500l2 4l1.500-1l-2-3.500h3.500z" fill="#fff" stroke="none" /></Corner></SideTool>
                <SideTool aria-label="Comment"><Corner><path d="M14 9a5.500 5.500 0 1 0-5.500 5.500H14zM6 7.500h5M6 10h5" /></Corner></SideTool>
                <SideTool aria-label="Highlight"><Corner><path d="M4 13l1-4l6-6l3 2.500l-6 6zM3 15.500h8" /></Corner></SideTool>
                <SideTool aria-label="Draw"><Corner><path d="M7 10c4 1 7-1 7-3s-4-3.500-7.500-2.500S2 9 4 10.500s4-1 2-1.500M4.500 10.500c1 2 4 2 6 1.500" /></Corner></SideTool>
                <SideTool aria-label="Text box"><Corner><rect x="2.500" y="3" width="12" height="12" strokeDasharray="2 1.500" /><path d="M6 12.500l2.500-7l2.500 7M7 10.500h3" /></Corner></SideTool>
                <SideTool aria-label="Sign"><Corner><path d="M3 13l2-6l4.500-4l4 4l-3.500 5l-6 1.500l3.500-4M3 15.500h9" /></Corner></SideTool>
              </SideBox>
            </SideTools>
            <Page>
              <Copybox $first>
                <Line $fill><b>TEMP(Pin 1) :Temperature Sense Input</b> &nbsp;Connecting TEMP pin to NTC thermistor's output in</Line>
                <Line $fill>Lithium ion battery pack. If TEMP pin's voltage is below 45% or above 80% of supply voltage V<Small>IN</Small></Line>
                <Line $fill>for more than 0.15S, this means that battery's temperature is too high or too low, charging is</Line>
                <Line>suspended. The temperature sense function can be disabled by grounding the TEMP pin.</Line>
                <Line $fill><b>PROG(Pin 2): Constant Charge Current Setting and Charge Current Monitor Pin</b> charge</Line>
                <Line $fill>current is set by connecting a resistor R<Small>ISET</Small> from this pin to GND. When in precharge mode, the</Line>
                <Line $fill>ISET pin's voltage is regulated to 0.2V. When in constant charge current mode, the ISET pin's</Line>
                <Line $fill>voltage is regulated to 2V.In all modes during charging, the voltage on ISET pin can be used to</Line>
                <FormulaLine>
                  measure the charge current as follows:
                  <Formula>
                    <i>I<Sub>BAT</Sub></i> =
                    <Fraction><span>V<P /></span><span>R<P /></span></Fraction>
                    ×1200
                    <Condition>(V<Small>PROG</Small>=1V)</Condition>
                  </Formula>
                </FormulaLine>
                <Line><b>GND(Pin3): Ground Terminal</b></Line>
                <Line $fill><b>Vcc(Pin 4): Positive Input Supply Voltage</b> V<Small>IN</Small> is the power supply to the internal circuit. When</Line>
                <Line $fill>V<Small>IN</Small> drops to within 30mv of the BAT pin voltage, TP4056 enters low power sleep mode, dropping</Line>
                <Line>BAT pin's current to less than 2uA.</Line>
                <Line $fill><b>BAT(Pin5): Battery Connection Pin.</b> Connect the positive terminal of the battery to BAT pin. BAT</Line>
                <Line $fill>pin draws less than 2uA current in chip disable mode or in sleep mode. BAT pin provides charge</Line>
                <Line>current to the battery and provides regulation voltage of 4.2V.</Line>
              </Copybox>
              <Copybox $loose>
                <Line><Bar $bold>STDBY</Bar><b>(Pin6): Open Drain Charge Status Output</b> When the battery Charge Termination, the</Line>
                <Line><Bar>STDBY</Bar> &nbsp;pin is pulled low by an internal switch, otherwise &nbsp;<Bar>STDBY</Bar> &nbsp;pin is in high impedance state.</Line>
                <Line><Bar $bold>CHRG</Bar> <b>(Pin7): Open Drain Charge Status Output</b> When the battery is being charged, the <Bar>CHRG</Bar></Line>
                <Line>pin is pulled low by an internal switch, otherwise &nbsp;<Bar>CHRG</Bar> &nbsp;pin is in high impedance state.</Line>
                <Line><b><Serif>CE</Serif>(Pin8): Chip Enable Input.</b> A high input will put the device in the normal operating mode.</Line>
                <Line $fill>Pulling the CE pin to low level will put the YP4056 into disable mode. The CE pin can be driven by</Line>
                <Line>TTL or CMOS logic level.</Line>
              </Copybox>
              <Title>ELECTRICAL CHARACTERISTICS</Title>
              <Copybox>
                <Line>The &nbsp;<Dot /> &nbsp;denotes specifications which apply over the full operating temperature range, otherwise</Line>
                <Line>specifications are at <b>T<Sub>A</Sub>=25℃，V<Sub>CC</Sub> =5V</b>, &nbsp;unless otherwise noted.</Line>
              </Copybox>
              <Spec>
                <colgroup>
                  {[54, 113, 128, 18, 34, 35, 35, 28].map((w, i) => <col key={i} width={w} />)}
                </colgroup>
                <thead>
                  <Row $h={24}>
                    <Head>SYMBOL</Head><Head $big>PARAMETER</Head><Head colSpan={2}>CONDITIONS</Head>
                    <Head>MIN</Head><Head $open>TYP</Head><Head $open>MAX</Head><Head $big>UNI<br />TS</Head>
                  </Row>
                </thead>
                <tbody>
                  <Row $h={15}>
                    <Cell>V<Sub>CC</Sub></Cell><Cell>Input Supply Voltage</Cell><Cell /><Cell><Dot /></Cell><Cell>4.0</Cell><Cell>5</Cell><Cell>8.0</Cell><Cell>V</Cell>
                  </Row>
                  <Row $h={70}>
                    <Cell>I<Sub>CC</Sub></Cell><Cell>Input Supply Current</Cell>
                    <Cell>
                      <div>Charge Mode, R<P /> = 1.2k</div><div>StandbyMode(Charge</div><div>Terminated)</div>
                      <div>Shutdown Mode (R<P /> Not</div><div>Connected,V<Sub>CC</Sub> &lt; V<Sub>BAT</Sub>, or V<Sub>CC</Sub></div><div>&lt; V<Sub>UV</Sub>)</div>
                    </Cell>
                    <Cell><div><Dot /></div><div><Dot /></div><div><Dot /></div></Cell>
                    <Cell /><Cell><div>150</div><div>55</div><div>55</div></Cell><Cell><div>500</div><div>100</div><div>100</div></Cell><Cell><div>µA</div><div>µA</div><div>µA</div></Cell>
                  </Row>
                  <Row $h={24}>
                    <Cell>V<Sub>FLOAL</Sub></Cell><Cell><div>Regulated Output (Float)</div><div>Voltage</div></Cell><Cell>0℃≤T<Sub>A</Sub>≤85℃, &nbsp;I<Sub>BAT</Sub>=40mA</Cell>
                    <Cell /><Cell>4.137</Cell><Cell>4.2</Cell><Cell>4.263</Cell><Cell>V</Cell>
                  </Row>
                  <Row $h={71}>
                    <Cell>I<Sub>BAT</Sub></Cell>
                    <Cell><div>BAT Pin Current</div><div /><div><Serif>Text condition:VBAT=4.0V</Serif></div></Cell>
                    <Cell><div>R<P /> = 2.4k, Current</div><div>Mode</div><div>R<P /> = 1.2k, Current</div><div>Mode</div><div>Standby Mode, V<Sub>BAT</Sub> = 4.2V</div></Cell>
                    <Cell><div><Dot /></div><div /><div><Dot /></div><div /><div><Dot /></div></Cell>
                    <Cell><div>450</div><div /><div>950</div><div /><div>0</div></Cell>
                    <Cell><div>500</div><div /><div>1000</div><div /><div>−2.5</div></Cell>
                    <Cell><div>550</div><div /><div>1050</div><div /><div>−6</div></Cell>
                    <Cell><div>mA</div><div /><div>mA</div><div /><div>µA</div></Cell>
                  </Row>
                  <Row $h={12}>
                    <Cell>I<Sub>TRIKL</Sub></Cell><Cell>Trickle Charge Current</Cell><Cell>V<Sub>BAT</Sub>&lt;V<Sub>TRIKL</Sub>, R<P />=1.2K</Cell>
                    <Cell><Dot /></Cell><Cell>120</Cell><Cell>130</Cell><Cell>140</Cell><Cell>mA</Cell>
                  </Row>
                  <Row $h={24}>
                    <Cell>V<Sub>TRIKL</Sub></Cell><Cell><div>Trickle Charge Threshold</div><div>Voltage</div></Cell><Cell>R<P />=1.2K, V<Sub>BAT</Sub> Rising</Cell>
                    <Cell /><Cell>2.8</Cell><Cell>2.9</Cell><Cell>3.0</Cell><Cell>V</Cell>
                  </Row>
                  <Row $h={24}><Cell /><Cell /><Cell /><Cell /><Cell /><Cell /><Cell /><Cell /></Row>
                </tbody>
              </Spec>
            </Page>
            <Track><Thumb /></Track>
            <Rail>
              <IconButton aria-label="Generate summary"><AiNote /></IconButton>
              <RailSep />
              <IconButton aria-label="Comments"><Comments /></IconButton>
              <IconButton aria-label="Bookmarks"><Marks /></IconButton>
              <IconButton aria-label="Pages"><Copy size={12} /></IconButton>
              <RailEnd>
                <PageNo $on>2</PageNo>
                <PageNo>3</PageNo>
                <IconButton aria-label="Previous page"><ChevronUp size={12} /></IconButton>
                <IconButton aria-label="Next page"><ChevronDown size={12} /></IconButton>
                <RailSep />
                <IconButton aria-label="Rotate"><RotateCw size={12} /></IconButton>
                <IconButton aria-label="Fit page"><FileIcon size={12} /></IconButton>
              </RailEnd>
            </Rail>
          </ReaderBody>
        </Reader>
      </Desktop>
    </>
  );
}
